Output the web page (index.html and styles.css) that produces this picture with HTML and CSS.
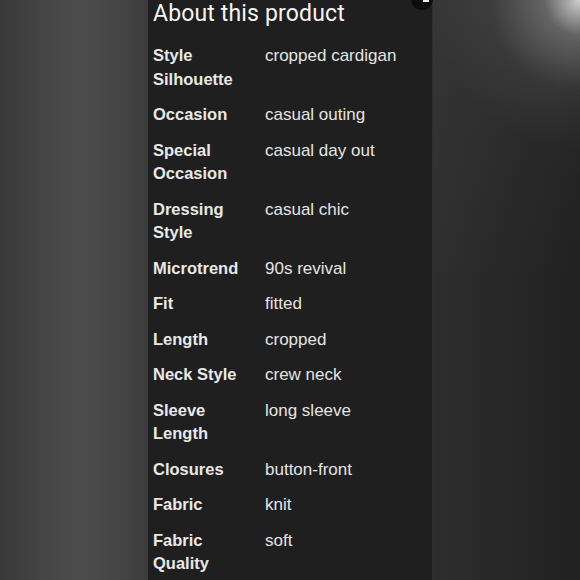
FILE: index.html
```html
<!DOCTYPE html>
<html lang="en">
<head>
    <meta charset="UTF-8">
    <meta name="viewport" content="width=device-width, initial-scale=1.0">
    <title>About this product</title>
    <link rel="stylesheet" href="styles.css">
</head>
<body>
    <div class="page">
        <div class="side-left"></div>
        <div class="panel">
            <span class="close-dot"></span>
            <h2 class="title">About this product</h2>
            <dl class="specs">
                <div class="row"><dt>Style Silhouette</dt><dd>cropped cardigan</dd></div>
                <div class="row"><dt>Occasion</dt><dd>casual outing</dd></div>
                <div class="row"><dt>Special Occasion</dt><dd>casual day out</dd></div>
                <div class="row"><dt>Dressing Style</dt><dd>casual chic</dd></div>
                <div class="row"><dt>Microtrend</dt><dd>90s revival</dd></div>
                <div class="row"><dt>Fit</dt><dd>fitted</dd></div>
                <div class="row"><dt>Length</dt><dd>cropped</dd></div>
                <div class="row"><dt>Neck Style</dt><dd>crew neck</dd></div>
                <div class="row"><dt>Sleeve Length</dt><dd>long sleeve</dd></div>
                <div class="row"><dt>Closures</dt><dd>button-front</dd></div>
                <div class="row"><dt>Fabric</dt><dd>knit</dd></div>
                <div class="row"><dt>Fabric Quality</dt><dd>soft</dd></div>
            </dl>
        </div>
        <div class="side-right"></div>
    </div>
</body>
</html>
```

FILE: styles.css
```css
body{
    margin: 0;
    background: #222;
}
.page{
    display: flex;
    width: 580px;
    height: 580px;
    overflow: hidden;
}

/* blurred sides */
.side-left{
    width: 148px;
    background: linear-gradient(90deg, #3a3a3a 0%, #474747 35%, #4d4d4d 55%, #454545 80%, #3c3c3c 100%);
}
.side-right{
    flex: 1;
    background:
        radial-gradient(circle at 100% 0%, rgba(235,235,235,0.85) 0px, rgba(170,170,170,0.45) 35px, rgba(110,110,110,0.18) 90px, rgba(0,0,0,0) 150px),
        linear-gradient(180deg, rgba(255,255,255,0.04) 0%, rgba(0,0,0,0) 50%),
        linear-gradient(90deg, #2e2e2e 0%, #292929 40%, #212121 100%);
}

.panel{
    position: relative;
    width: 279px;
    background: #1f1f1f;
    padding: 0 0 0 5px;
    color: #f2f2f2;
    border-right: 1px solid #2f2f2f;
}
.close-dot{
    position: absolute;
    right: -1px;
    top: -12px;
    width: 22px;
    height: 22px;
    border-radius: 50%;
    background: #0c0c0c;
}
.close-dot::after{
    content: "";
    position: absolute;
    left: 12px;
    top: 11px;
    width: 6px;
    height: 3px;
    background: #eee;
}

.title{
    margin: 0;
    font-family: Roboto, "Open Sans", sans-serif;
    font-weight: 400;
    font-size: 23px;
    line-height: 28px;
    letter-spacing: 0.15px;
    color: #f4f4f4;
}

.specs{
    margin: 16px 0 0 0;
    display: flex;
    flex-direction: column;
    gap: 12px;
}
.row{
    display: flex;
    line-height: 23.5px;
}
.row dt{
    width: 95px;
    margin-right: 17px;
    flex-shrink: 0;
    font-family: "Liberation Sans", Arial, sans-serif;
    font-weight: 700;
    font-size: 16.5px;
    color: #e8e8e8;
}
.row dd{
    margin: 0;
    font-family: "Liberation Sans", Arial, sans-serif;
    font-size: 17px;
    color: #e4e4e4;
}
```
